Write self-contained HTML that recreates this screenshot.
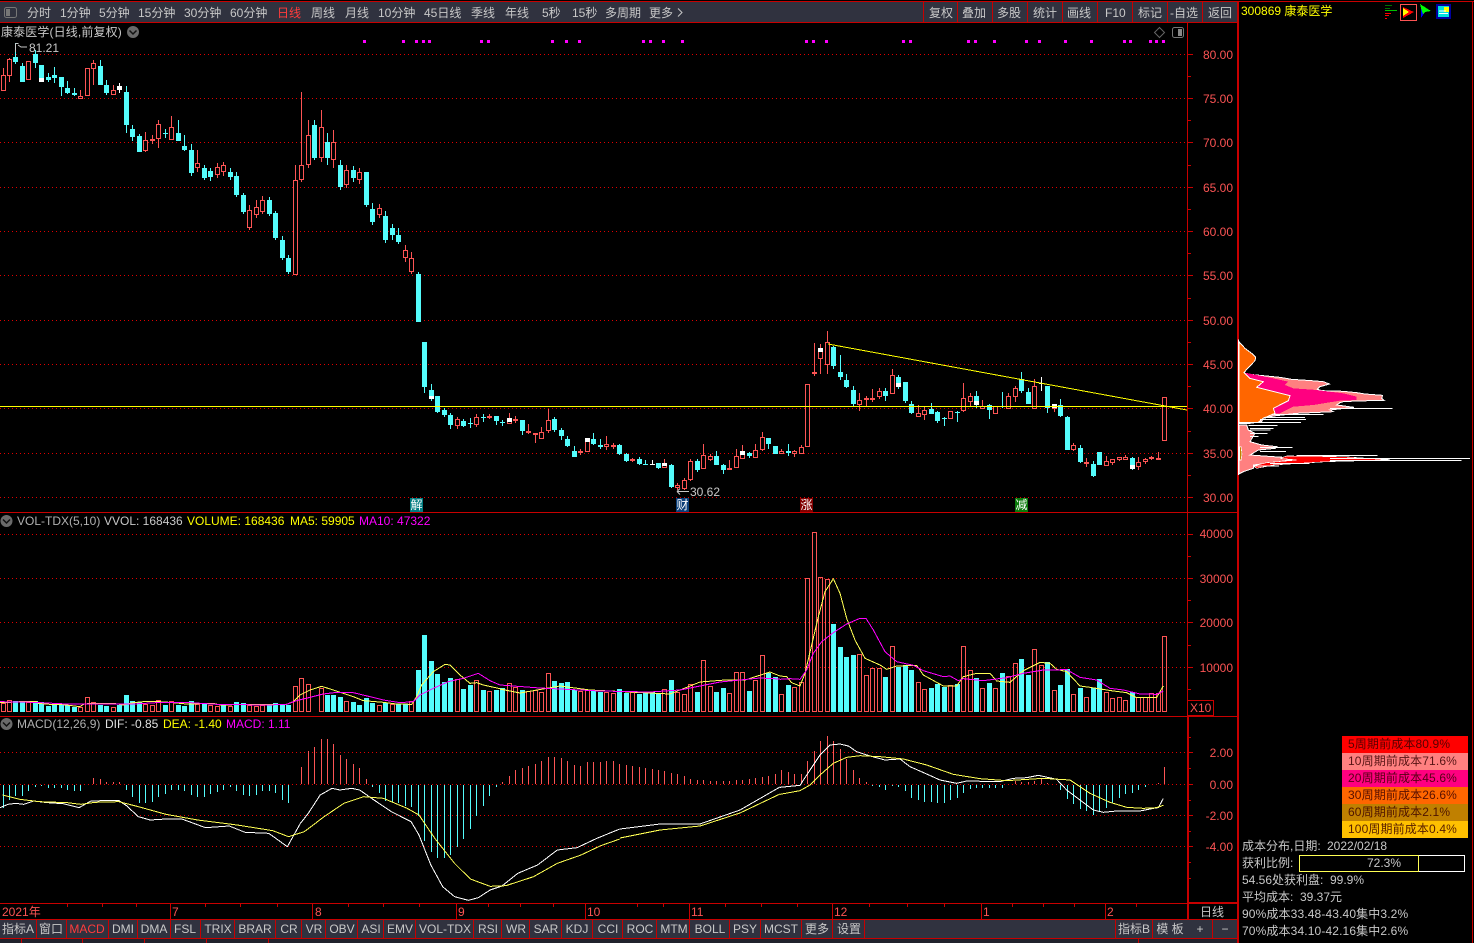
<!DOCTYPE html>
<html><head><meta charset="utf-8"><title>康泰医学</title>
<style>
html,body{margin:0;padding:0;background:#000;width:1474px;height:943px;overflow:hidden}
svg{display:block;position:absolute;left:0;top:0}
text{font-family:"Liberation Sans","WenQuanYi Zen Hei","Noto Sans CJK SC",sans-serif;font-size:12px;fill:#c8c8c8}
.m{text-anchor:middle}.e{text-anchor:end}
.a{fill:#fc5454}.y{fill:#ffff00}.p{fill:#ff00ff}.l{fill:#3a0000;fill-opacity:.85}
.t{letter-spacing:.13px}
.ln polyline{fill:none;stroke-width:1;vector-effect:non-scaling-stroke}
</style></head><body>
<svg width="1474" height="943" viewBox="0 0 1474 943" xmlns="http://www.w3.org/2000/svg">
<rect width="1474" height="943" fill="#000"/>
<g shape-rendering="crispEdges">
<rect x="0" y="2" width="1238" height="20" fill="#30323f"/>
<rect x="0" y="920" width="1238" height="18" fill="#30323f"/>
<rect x="0" y="939" width="1238" height="4" fill="#20222c"/>
<rect x="0" y="1" width="1474" height="1" fill="#c80000"/>
<rect x="0" y="22" width="1238" height="1" fill="#c80000"/>
<rect x="1237" y="1" width="2" height="942" fill="#c80000"/>
<rect x="1472" y="1" width="1" height="942" fill="#c80000"/>
<path d="M923.5 2V22M957.5 2V22M992.5 2V22M1027.5 2V22M1062.5 2V22M1097.5 2V22M1132.5 2V22M1167.5 2V22M1202.5 2V22" stroke="#c80000" fill="none"/>
<rect x="0" y="512" width="1238" height="1" fill="#c80000"/>
<rect x="0" y="716" width="1238" height="1" fill="#c80000"/>
<rect x="0" y="903" width="1238" height="1" fill="#c80000"/>
<rect x="1187" y="902" width="51" height="2" fill="#c80000"/>
<rect x="0" y="919" width="1238" height="1" fill="#c80000"/>
<rect x="0" y="938" width="1238" height="1" fill="#c80000"/>
<rect x="1187" y="23" width="1" height="693" fill="#c80000"/>
<rect x="1187" y="716" width="2" height="203" fill="#c80000"/>
<path d="M170.500 904V919M312.500 904V919M456.500 904V919M585.500 904V919M689.500 904V919M832.500 904V919M981.500 904V919M1105.500 904V919" stroke="#c80000" fill="none"/>
<path d="M67.500 904v3M102.500 904v3M136.500 904v3M205.500 904v3M240.500 904v3M277.500 904v3M348.500 904v3M383.500 904v3M419.500 904v3M488.500 904v3M520.500 904v3M553.500 904v3M637.500 904v3M663.500 904v3M725.500 904v3M761.500 904v3M797.500 904v3M869.500 904v3M907.500 904v3M944.500 904v3M1012.500 904v3M1043.500 904v3M1074.500 904v3M1136.500 904v3" stroke="#c80000" fill="none"/>
<path d="M36.500 920V938M66.500 920V938M108.500 920V938M137.500 920V938M170.500 920V938M200.500 920V938M234.500 920V938M275.500 920V938M301.500 920V938M325.500 920V938M357.500 920V938M383.500 920V938M415.500 920V938M473.500 920V938M501.500 920V938M529.500 920V938M561.500 920V938M592.500 920V938M622.500 920V938M656.500 920V938M689.500 920V938M729.500 920V938M760.500 920V938M801.500 920V938M832.500 920V938M864.500 920V938M1115.500 920V938M1152.500 920V938M1212.500 920V938" stroke="#c80000" fill="none"/>
<path d="M21.500 939v4M82.500 939v4M144.500 939v4M206.500 939v4M268.500 939v4M1138.500 939v4" stroke="#c80000" fill="none"/>
<rect x="1187.500" y="700.500" width="26" height="15" fill="none" stroke="#c80000"/>

<!-- grid -->
<path d="M0 54.5H1187M0 98.5H1187M0 142.5H1187M0 187.5H1187M0 231.5H1187M0 275.5H1187M0 320.5H1187M0 364.5H1187M0 408.5H1187M0 453.5H1187M0 497.5H1187M0 534.5H1187M0 578.5H1187M0 622.5H1187M0 667.5H1187M0 752.5H1187M0 784.5H1187M0 815.5H1187M0 846.5H1187" stroke="#e00000" stroke-dasharray="1 3" fill="none"/>
<path d="M1188 54.5h5M1188 98.5h5M1188 142.5h5M1188 187.5h5M1188 231.5h5M1188 275.5h5M1188 320.5h5M1188 364.5h5M1188 408.5h5M1188 453.5h5M1188 497.5h5M1188 534.5h5M1188 578.5h5M1188 622.5h5M1188 667.5h5M1188 752.5h5M1188 784.5h5M1188 815.5h5M1188 846.5h5M1188 76.5h3M1188 120.5h3M1188 165.5h3M1188 209.5h3M1188 253.5h3M1188 298.5h3M1188 342.5h3M1188 386.5h3M1188 431.5h3M1188 475.5h3M1188 556.5h3M1188 600.5h3M1188 645.5h3M1188 689.5h3M1188 737.5h3M1188 768.5h3M1188 800.5h3M1188 831.5h3M1188 862.5h3M1188 878.5h3" stroke="#c80000" fill="none"/>

<!-- volume bars cyan -->
<path stroke="#54fcfc" stroke-width="5" fill="none" d="M15.5 701V712M22.5 701V712M35.5 701V712M41.5 702V712M48.5 706V712M54.5 704V712M61.5 704V712M67.5 705V712M74.5 707V712M100.5 705V712M106.5 706V712M119.5 705V712M126.500 695V712M132.5 701V712M139.5 702V712M165.5 705V712M178.5 705V712M184.5 706V712M191.5 701V712M204.5 704V712M223.5 705V712M236.5 702V712M243.5 703V712M269.5 705V712M275.5 703V712M282.5 705V712M288.5 705V712M327.5 695V712M333.5 695V712M340.5 697V712M353.5 702V712M359.5 705V712M366.5 698V712M372.5 703V712M385.5 703V712M398.5 704V712M405.5 704V712M418.5 670V712M424.5 635V712M431.5 661V712M437.5 674V712M444.5 682V712M450.5 678V712M463.5 689V712M470.5 685V712M483.5 690V712M496.5 690V712M502.5 688V712M522.5 690V712M554.5 681V712M561.5 683V712M567.5 682V712M574.5 690V712M593.5 691V712M600.5 692V712M619.5 689V712M626.5 693V712M639.5 694V712M645.5 693V712M652.5 692V712M658.5 693V712M671.5 680V712M697.5 692V712M716.5 692V712M723.5 688V712M749.5 691V712M768.5 673V712M775.5 677V712M788.5 685V712M833.5 624V712M840.5 647V712M846.5 657V712M853.5 655V712M885.5 677V712M898.5 667V712M905.5 665V712M911.5 670V712M931.5 688V712M937.5 684V712M944.5 687V712M957.5 684V712M976.5 678V712M989.5 683V712M1002.5 673V712M1021.5 659V712M1028.5 675V712M1047.5 662V712M1060.5 685V712M1067.5 669V712M1080.5 688V712M1093.5 688V712M1099.5 679V712M1132.5 692V712"/>
<!-- volume bars red -->
<path stroke="#fc5454" fill="none" d="M1.5 703.5h4V711.5h-4zM7.5 700.5h4V711.5h-4zM26.5 702.5h4V711.5h-4zM78.5 707.5h4V711.5h-4zM85.5 697.5h4V711.5h-4zM91.5 702.5h4V711.5h-4zM111.5 707.5h4V711.5h-4zM143.5 704.5h4V711.5h-4zM150.5 705.5h4V711.5h-4zM156.5 700.5h4V711.5h-4zM169.5 701.5h4V711.5h-4zM195.5 704.5h4V711.5h-4zM208.5 705.5h4V711.5h-4zM215.5 706.5h4V711.5h-4zM228.5 706.5h4V711.5h-4zM247.5 705.5h4V711.5h-4zM254.5 706.5h4V711.5h-4zM260.5 705.5h4V711.5h-4zM293.5 686.5h4V711.5h-4zM299.5 678.5h4V711.5h-4zM306.5 684.5h4V711.5h-4zM319.5 688.5h4V711.5h-4zM344.5 701.5h4V711.5h-4zM377.5 705.5h4V711.5h-4zM390.5 704.5h4V711.5h-4zM409.5 701.5h4V711.5h-4zM455.5 679.5h4V711.5h-4zM474.5 680.5h4V711.5h-4zM487.5 691.5h4V711.5h-4zM507.5 683.5h4V711.5h-4zM513.5 687.5h4V711.5h-4zM526.5 691.5h4V711.5h-4zM533.5 690.5h4V711.5h-4zM539.5 692.5h4V711.5h-4zM546.5 673.5h4V711.5h-4zM578.5 691.5h4V711.5h-4zM585.5 690.5h4V711.5h-4zM604.5 692.5h4V711.5h-4zM611.5 693.5h4V711.5h-4zM630.5 692.5h4V711.5h-4zM662.5 689.5h4V711.5h-4zM675.5 692.5h4V711.5h-4zM682.5 694.5h4V711.5h-4zM688.5 684.5h4V711.5h-4zM701.5 660.5h4V711.5h-4zM708.5 686.5h4V711.5h-4zM727.5 693.5h4V711.5h-4zM734.5 672.5h4V711.5h-4zM740.5 672.5h4V711.5h-4zM753.5 680.5h4V711.5h-4zM760.5 655.5h4V711.5h-4zM779.5 694.5h4V711.5h-4zM792.5 687.5h4V711.5h-4zM799.5 682.5h4V711.5h-4zM805.5 578.5h4V711.5h-4zM812.5 532.5h4V711.5h-4zM818.5 577.5h4V711.5h-4zM825.5 579.5h4V711.5h-4zM857.5 654.5h4V711.5h-4zM864.5 675.5h4V711.5h-4zM870.5 668.5h4V711.5h-4zM877.5 668.5h4V711.5h-4zM890.5 646.5h4V711.5h-4zM916.5 682.5h4V711.5h-4zM922.5 689.5h4V711.5h-4zM948.5 685.5h4V711.5h-4zM961.5 646.5h4V711.5h-4zM968.5 670.5h4V711.5h-4zM980.5 688.5h4V711.5h-4zM993.5 688.5h4V711.5h-4zM1006.5 676.5h4V711.5h-4zM1013.5 663.5h4V711.5h-4zM1032.5 649.5h4V711.5h-4zM1039.5 665.5h4V711.5h-4zM1052.5 690.5h4V711.5h-4zM1071.5 694.5h4V711.5h-4zM1084.5 697.5h4V711.5h-4zM1104.5 692.5h4V711.5h-4zM1110.5 698.5h4V711.5h-4zM1117.5 697.5h4V711.5h-4zM1123.5 700.5h4V711.5h-4zM1136.5 697.5h4V711.5h-4zM1143.5 697.5h4V711.5h-4zM1149.5 693.5h4V711.5h-4zM1156.5 693.5h4V711.5h-4zM1162.5 636.5h4V711.5h-4z"/>

<!-- MACD histogram red -->
<path stroke="#fc5454" fill="none" d="M93.5 784v-6M100.5 784v-5M106.5 784v-2M113.5 784v-2M119.5 784v-2M301.5 784v-17M308.5 784v-33M314.5 784v-37M321.5 784v-45M327.5 784v-45M333.5 784v-40M340.5 784v-29M346.5 784v-25M353.5 784v-20M359.5 784v-16M366.5 784v-5M502.5 784v-2M509.5 784v-8M515.5 784v-14M522.5 784v-16M528.5 784v-18M535.5 784v-20M541.5 784v-23M548.5 784v-27M554.5 784v-27M561.5 784v-26M567.5 784v-23M574.5 784v-19M580.5 784v-18M587.5 784v-22M593.5 784v-22M600.5 784v-22M606.5 784v-23M613.5 784v-23M619.5 784v-20M626.5 784v-19M632.5 784v-18M639.5 784v-17M645.5 784v-16M652.5 784v-15M658.5 784v-14M664.5 784v-13M671.5 784v-11M677.5 784v-10M684.5 784v-8M690.5 784v-5M697.5 784v-4M703.5 784v-4M710.5 784v-3M716.5 784v-3M723.5 784v-3M729.5 784v-3M736.5 784v-4M742.5 784v-4M749.5 784v-5M755.5 784v-6M762.5 784v-7M768.5 784v-8M775.5 784v-10M781.5 784v-14M788.5 784v-12M794.5 784v-10M801.5 784v-10M807.5 784v-23M814.5 784v-33M820.5 784v-43M827.5 784v-48M833.5 784v-43M840.5 784v-35M846.5 784v-25M853.5 784v-14M859.5 784v-6M866.5 784v-2M1015.5 784v-3M1021.5 784v-2M1028.5 784v-2M1034.5 784v-3M1041.5 784v-5M1047.5 784v-1M1158.5 784v-1M1164.5 784v-17"/>
<!-- MACD histogram cyan -->
<path stroke="#54fcfc" fill="none" d="M3.5 785v23M9.5 785v15M15.5 785v11M22.5 785v11M28.5 785v6M35.5 785v2M41.5 785v1M48.5 785v3M54.5 785v3M61.5 785v3M67.5 785v5M74.5 785v6M80.5 785v6M126.5 785v5M132.5 785v12M139.5 785v18M145.5 785v18M152.5 785v17M158.5 785v12M165.5 785v9M171.5 785v5M178.5 785v5M184.5 785v6M191.5 785v10M197.5 785v12M204.5 785v12M210.5 785v9M217.5 785v7M223.5 785v5M230.5 785v2M236.5 785v6M243.5 785v10M249.5 785v11M256.5 785v10M262.5 785v6M269.5 785v6M275.5 785v8M282.5 785v15M288.5 785v18M372.5 785v2M379.5 785v8M385.5 785v16M392.5 785v17M398.5 785v18M405.5 785v21M411.5 785v22M418.5 785v31M424.5 785v56M431.5 785v67M437.5 785v73M444.5 785v73M450.5 785v70M457.5 785v62M463.5 785v54M470.5 785v44M476.5 785v31M483.5 785v21M489.5 785v11M496.5 785v2M872.5 785v1M879.5 785v2M885.5 785v5M892.5 785v1M898.5 785v2M905.5 785v6M911.5 785v13M918.5 785v15M924.5 785v17M931.5 785v17M937.5 785v18M944.5 785v18M950.5 785v15M957.5 785v13M963.5 785v8M970.5 785v4M976.5 785v3M982.5 785v3M989.5 785v3M995.5 785v3M1002.5 785v3M1060.5 785v5M1067.5 785v14M1073.5 785v19M1080.5 785v24M1086.5 785v26M1093.5 785v30M1099.5 785v27M1106.5 785v23M1112.5 785v18M1119.5 785v13M1125.5 785v9M1132.5 785v8M1138.5 785v5M1145.5 785v2"/>

<!-- candles: cyan wicks -->
<path stroke="#54fcfc" fill="none" d="M15.5 43V64M22.5 63V82M35.5 50V68M48.5 73V82M54.5 67V83M61.5 77V96M67.5 81V94M74.5 88V96M100.5 60V85M106.5 80V95M126.5 86V133M132.5 125V141M139.5 134V152M165.5 129V138M178.5 120V141M184.5 135V151M191.5 144V176M204.5 165V180M210.5 168V181M230.5 168V180M236.5 172V197M243.5 193V214M269.5 197V216M275.5 211V240M282.5 236V260M288.5 255V274M314.5 120V160M327.5 133V165M340.5 160V190M353.5 166V182M366.5 172V207M372.5 203V225M385.5 211V243M392.5 224V240M398.5 228V244M418.5 272V322M424.5 342V393M431.5 384V401M437.5 396V413M444.5 408V417M450.5 413V429M463.5 419V427M470.5 418V428M483.5 414V422M496.5 416V425M502.5 420V426M522.5 420V435M554.5 417V432M561.5 428V440M567.5 436V447M574.5 446V457M593.5 433V445M600.5 439V449M619.5 444V455M626.5 453V462M639.5 457V465M645.5 460V465M658.5 463V469M671.5 464V488M697.5 459V472M716.5 451V465M723.5 464V474M749.5 452V458M768.5 438V449M775.5 446V454M788.5 444V456M833.5 346V369M840.5 355V380M846.5 374V388M853.5 386V406M885.5 388V401M898.5 375V389M905.5 382V403M911.5 401V414M931.5 403V414M937.5 411V423M944.5 417V426M957.5 411V422M976.5 391V408M989.5 404V419M1002.5 392V408M1021.5 372V393M1028.5 388V404M1047.5 386V413M1060.5 399V417M1067.5 416V450M1080.5 445V463M1093.5 461V477M1099.5 452V465M1132.5 457V470"/>
<!-- red wicks -->
<path stroke="#fc5454" fill="none" d="M3.5 68V91M9.5 58V82M80.5 90V99M93.5 60V85M113.5 85V95M145.5 132V152M152.5 135V144M158.5 120V148M171.5 116V140M197.5 150V172M217.5 163V178M223.5 162V176M249.5 205V230M256.5 200V218M262.5 196V214M295.5 165V275M301.5 92V182M308.5 120V168M321.5 110V162M333.5 130V168M346.5 165V188M359.5 168V184M379.5 204V218M405.5 245V262M411.5 252V274M457.5 417V429M476.5 414V427M489.5 414V419M509.5 413V424M515.5 416V423M528.5 424V434M535.5 433V443M541.5 427V439M548.5 409V433M580.5 449V455M606.5 436V450M613.5 443V449M632.5 458V462M664.5 459V468M677.5 483V490M684.5 478V490M690.5 459V481M703.5 444V469M710.5 454V461M729.5 460V470M736.5 449V468M742.5 445V459M755.5 444V458M762.5 432V451M781.5 449V454M794.5 450V457M801.5 445V454M814.5 343V376M820.5 344V374M827.5 331V374M859.5 393V411M866.5 396V406M872.5 389V402M879.5 388V399M892.5 369V394M918.5 405V417M924.5 407V420M963.5 383V412M970.5 393V406M982.5 400V409M1008.5 393V409M1015.5 386V402M1034.5 379V409M1054.5 404V412M1073.5 443V451M1086.5 458V467M1106.5 456V466M1112.5 459V465M1119.5 457V461M1125.5 455V460M1138.5 457V470M1145.5 458V464M1151.5 456V460M1158.5 452V459"/>
<!-- white wicks -->
<path stroke="#ffffff" fill="none" d="M119.5 83V93M652.5 460V465M1041.5 377V391"/>
<!-- cyan bodies -->
<path stroke="#54fcfc" stroke-width="5" fill="none" d="M15.5 57V62M22.5 66V82M35.5 54V63M41.5 65V82M48.5 77V80M54.5 75V78M61.5 77V87M67.5 88V93M74.5 93V95M100.5 66V85M106.5 85V93M126.5 92V125M132.5 129V137M139.5 136V152M165.5 133V134M178.5 133V141M184.5 146V150M191.5 150V173M204.5 168V178M210.5 171V177M230.5 172V177M236.5 176V195M243.5 195V212M269.5 200V214M275.5 213V238M282.5 240V258M288.5 258V272M314.5 125V158M327.5 142V158M340.5 165V187M353.5 170V178M366.5 172V205M372.5 209V222M385.5 216V240M392.5 228V235M398.5 235V242M418.5 274V322M424.5 342V387M431.5 390V399M437.5 396V412M444.5 410V415M450.5 415V425M463.5 421V426M470.5 423V424M483.5 417V418M496.5 416V421M502.5 422V423M522.5 420V431M554.5 419V430M561.5 430V436M567.5 439V446M574.5 451V457M593.5 439V444M600.5 445V447M619.5 445V454M626.5 454V461M639.5 459V464M645.5 464V465M658.5 463V468M671.5 465V487M697.5 461V470M716.5 456V465M723.5 465V470M749.5 453V456M768.5 438V444M775.5 446V454M788.5 451V453M833.5 347V366M840.5 372V377M846.5 380V387M853.5 390V404M885.5 391V396M898.5 377V387M905.5 382V401M911.5 404V413M931.5 409V414M937.5 412V421M944.5 418V419M957.5 412V413M976.5 396V405M989.5 405V410M1002.5 406V407M1021.5 379V391M1028.5 392V404M1047.5 386V408M1060.5 405V416M1067.5 417V450M1080.5 448V462M1093.5 464V476M1099.5 452V465M1132.5 458V469"/>
<!-- red bodies -->
<path stroke="#fc5454" fill="#000" d="M1.5 75.5h4V90.5h-4zM7.5 59.5h4V75.5h-4zM26.5 61.5h4V79.5h-4zM78.5 96.5h4V98.5h-4zM85.5 68.5h4V95.5h-4zM91.5 63.5h4V68.5h-4zM111.5 90.5h4V94.5h-4zM143.5 140.5h4V150.5h-4zM150.5 139.5h4V140.5h-4zM156.5 124.5h4V138.5h-4zM169.5 127.5h4V139.5h-4zM195.5 163.5h4V167.5h-4zM215.5 167.5h4V174.5h-4zM221.5 165.5h4V171.5h-4zM247.5 210.5h4V227.5h-4zM254.5 207.5h4V214.5h-4zM260.5 200.5h4V211.5h-4zM293.5 180.5h4V274.5h-4zM299.5 165.5h4V179.5h-4zM306.5 135.5h4V164.5h-4zM319.5 127.5h4V157.5h-4zM331.5 142.5h4V159.5h-4zM344.5 170.5h4V184.5h-4zM357.5 172.5h4V179.5h-4zM377.5 208.5h4V214.5h-4zM403.5 250.5h4V257.5h-4zM409.5 258.5h4V271.5h-4zM455.5 419.5h4V425.5h-4zM474.5 417.5h4V424.5h-4zM487.5 416.5h4V417.5h-4zM507.5 418.5h4V423.5h-4zM513.5 419.5h4V420.5h-4zM526.5 431.5h4V432.5h-4zM533.5 433.5h4V434.5h-4zM539.5 432.5h4V438.5h-4zM546.5 420.5h4V430.5h-4zM578.5 451.5h4V452.5h-4zM585.5 438.5h4V451.5h-4zM604.5 444.5h4V446.5h-4zM611.5 445.5h4V446.5h-4zM630.5 459.5h4V460.5h-4zM662.5 463.5h4V467.5h-4zM675.5 485.5h4V487.5h-4zM682.5 480.5h4V488.5h-4zM688.5 461.5h4V479.5h-4zM701.5 455.5h4V468.5h-4zM708.5 456.5h4V459.5h-4zM727.5 468.5h4V469.5h-4zM734.5 456.5h4V467.5h-4zM740.5 451.5h4V458.5h-4zM753.5 450.5h4V457.5h-4zM760.5 437.5h4V449.5h-4zM779.5 451.5h4V453.5h-4zM792.5 451.5h4V453.5h-4zM799.5 447.5h4V453.5h-4zM805.5 384.5h4V446.5h-4zM812.5 372.5h4V373.5h-4zM818.5 348.5h4V358.5h-4zM825.5 342.5h4V364.5h-4zM857.5 400.5h4V404.5h-4zM864.5 398.5h4V399.5h-4zM870.5 398.5h4V399.5h-4zM877.5 391.5h4V396.5h-4zM890.5 375.5h4V393.5h-4zM916.5 413.5h4V416.5h-4zM922.5 410.5h4V414.5h-4zM948.5 411.5h4V418.5h-4zM961.5 398.5h4V410.5h-4zM968.5 396.5h4V401.5h-4zM980.5 406.5h4V408.5h-4zM993.5 406.5h4V413.5h-4zM1006.5 396.5h4V408.5h-4zM1013.5 388.5h4V396.5h-4zM1032.5 386.5h4V408.5h-4zM1052.5 404.5h4V408.5h-4zM1071.5 445.5h4V449.5h-4zM1084.5 462.5h4V463.5h-4zM1104.5 461.5h4V465.5h-4zM1110.5 459.5h4V462.5h-4zM1117.5 457.5h4V459.5h-4zM1123.5 457.5h4V459.5h-4zM1136.5 462.5h4V466.5h-4zM1143.5 459.5h4V461.5h-4zM1149.5 457.5h4V458.5h-4zM1156.5 458.5h4V459.5h-4zM1162.5 397.5h4V440.5h-4z"/>
<!-- white bodies -->
<path stroke="#ffffff" stroke-width="5" fill="none" d="M41.5 78V82M119.5 86V90M431.5 396V399M509.5 418V422M587.5 438V442M652.5 464V465M664.5 463V466M742.5 451V455M820.5 348V352M898.5 383V387M976.5 401V405M1041.5 383V384M1054.5 404V408M1132.5 465V469"/>

<!-- lines -->
<g class="ln">
<g transform="translate(0 510) scale(.33333)"><polyline stroke="#ffff54" points="0,578 30,577 60,575 110,575 115,580 150,583 190,584 240,590 250,583 270,580 340,580 370,585 400,578 430,575 480,575 520,578 560,582 640,580 660,585 760,583 860,583 880,575 900,555 930,540 965,529 1000,540 1030,550 1060,560 1090,572 1150,577 1190,582 1235,583 1250,560 1265,525 1300,485 1335,463 1350,465 1380,495 1410,520 1430,518 1450,525 1500,536"/></g>
<polyline stroke="#ffff54" points="500,689 520,693 560,686 590,690 630,692 670,694 700,682 725,680 745,680 770,672 780,676"/>
<g transform="translate(780 520) scale(.33333)"><polyline stroke="#ffff54" points="0,468 20,470 35,488 60,498 75,460 95,375 115,290 135,215 160,176 180,220 200,295 225,360 255,415 300,435 320,448 350,438 410,436 430,465 490,498 530,498 550,470 590,460 630,460 650,483 690,487 730,452 780,427 810,430 830,448 860,455 900,498 930,502 1000,513 1040,518 1070,533 1130,532 1150,498"/></g>
<g transform="translate(0 510) scale(.33333)"><polyline stroke="#ff00ff" points="0,575 100,577 200,582 400,582 470,578 570,578 650,583 800,585 860,583 890,572 930,562 970,552 1010,547 1060,548 1110,560 1150,570 1200,578 1240,575 1260,555 1300,535 1345,515 1390,505 1435,490 1470,512 1500,525"/></g>
<polyline stroke="#ff00ff" points="500,685 540,688 600,691 650,692 680,690 720,682 760,678 780,679"/>
<g transform="translate(780 520) scale(.33333)"><polyline stroke="#ff00ff" points="0,478 30,476 60,478 80,450 100,400 125,365 160,338 200,312 240,295 258,295 280,330 315,395 350,425 400,436 430,452 490,470 510,468 535,482 550,476 610,482 680,473 730,460 790,450 860,449 900,472 950,480 990,505 1030,510 1080,522 1130,523 1150,513"/></g>
<g transform="translate(0 715) scale(.39526 .33333)"><polyline stroke="#ffffff" points="0,278 20,268 40,265 60,268 85,258 120,263 160,266 200,278 230,258 260,257 300,256 320,272 350,305 380,315 420,312 460,312 490,325 520,338 580,333 620,352 680,355 727,395 760,325 780,295 810,240 840,220 860,225 890,220 910,225 940,250 990,290 1040,320 1060,360 1090,450 1120,515 1150,545 1185,556 1210,548 1240,525 1270,513 1310,475 1360,450 1410,405 1460,398 1510,370 1568,342"/></g>
<polyline stroke="#ffffff" points="620,829 660,824 700,824 740,810 780,787"/>
<g transform="translate(780 720) scale(.33333)"><polyline stroke="#ffffff" points="0,202 60,196 90,150 120,105 150,75 180,72 205,78 230,95 270,108 315,120 360,117 390,140 440,162 480,180 530,190 560,183 660,185 700,175 740,173 775,166 830,178 860,210 900,240 940,270 970,277 1010,273 1080,273 1120,265 1135,263 1150,235"/></g>
<g transform="translate(0 715) scale(.39526 .33333)"><polyline stroke="#ffff54" points="6,240 50,253 100,260 170,263 205,268 240,262 300,260 350,275 420,298 500,315 600,330 690,347 730,365 770,350 820,305 870,265 920,245 970,250 1030,280 1060,300 1100,370 1150,445 1190,492 1240,514 1280,512 1350,485 1410,445 1470,420 1520,392 1568,372"/></g>
<polyline stroke="#ffff54" points="620,838 660,830 700,826 740,813 780,794"/>
<g transform="translate(780 720) scale(.33333)"><polyline stroke="#ffff54" points="0,223 60,212 90,195 120,165 160,130 200,112 240,107 300,110 370,117 440,135 520,163 600,176 680,182 790,175 870,180 930,220 990,247 1040,262 1090,265 1130,263 1150,256"/></g>
</g>
<!-- trend lines -->
<path d="M0 406.500H1187" stroke="#ffff00" fill="none"/>
<path d="M828 344L1187 410" stroke="#ffff00" fill="none"/>
</g>

<g shape-rendering="crispEdges" fill="#ff00ff">
<rect x="363" y="40" width="3" height="3"/><rect x="402" y="40" width="3" height="3"/><rect x="415" y="40" width="3" height="3"/><rect x="422" y="40" width="3" height="3"/><rect x="428" y="40" width="3" height="3"/><rect x="480" y="40" width="3" height="3"/><rect x="487" y="40" width="3" height="3"/><rect x="551" y="40" width="3" height="3"/><rect x="565" y="40" width="3" height="3"/><rect x="578" y="40" width="3" height="3"/><rect x="642" y="40" width="3" height="3"/><rect x="649" y="40" width="3" height="3"/><rect x="662" y="40" width="3" height="3"/><rect x="681" y="40" width="3" height="3"/><rect x="805" y="40" width="3" height="3"/><rect x="812" y="40" width="3" height="3"/><rect x="825" y="40" width="3" height="3"/><rect x="902" y="40" width="3" height="3"/><rect x="909" y="40" width="3" height="3"/><rect x="967" y="40" width="3" height="3"/><rect x="974" y="40" width="3" height="3"/><rect x="993" y="40" width="3" height="3"/><rect x="1025" y="40" width="3" height="3"/><rect x="1038" y="40" width="3" height="3"/><rect x="1064" y="40" width="3" height="3"/><rect x="1090" y="40" width="3" height="3"/><rect x="1123" y="40" width="3" height="3"/><rect x="1129" y="40" width="3" height="3"/><rect x="1149" y="40" width="3" height="3"/><rect x="1155" y="40" width="3" height="3"/><rect x="1162" y="40" width="3" height="3"/>
</g>

<rect x="4.500" y="7.500" width="12" height="10" rx="2" fill="#30323f" stroke="#777"/><rect x="6" y="9" width="4" height="7" fill="#777"/>
<text x="27" y="17">分时</text><text x="60" y="17">1分钟</text><text x="99" y="17">5分钟</text><text x="138" y="17">15分钟</text><text x="184" y="17">30分钟</text><text x="230" y="17">60分钟</text><text x="277" y="17" style="fill:#ff3c3c">日线</text><text x="311" y="17">周线</text><text x="345" y="17">月线</text><text x="378" y="17">10分钟</text><text x="424" y="17">45日线</text><text x="471" y="17">季线</text><text x="505" y="17">年线</text><text x="542" y="17">5秒</text><text x="572" y="17">15秒</text><text x="605" y="17">多周期</text><text x="649" y="17">更多</text>
<path d="M678 8.500l4 4-4 4" fill="none" stroke="#c8c8c8"/>
<text x="929" y="17">复权</text><text x="962" y="17">叠加</text><text x="997" y="17">多股</text><text x="1033" y="17">统计</text><text x="1067" y="17">画线</text><text x="1105" y="17">F10</text><text x="1138" y="17">标记</text><text x="1170" y="17">-自选</text><text x="1208" y="17">返回</text>

<text class="t" x="1" y="36">康泰医学(日线,前复权)</text>
<circle cx="133" cy="32" r="6" fill="#6a6a6a"/><path d="M129.500 30.500l3.500 3.500 3.500-3.500" fill="none" stroke="#111" stroke-width="1.500"/>
<path d="M1159.500 27.500l5 5-5 5-5-5z" fill="none" stroke="#666"/>
<rect x="1172.500" y="27.500" width="11" height="10" rx="2" fill="none" stroke="#777"/><rect x="1178" y="29" width="4" height="7" fill="#888"/>

<path d="M15.500 43.500V52M15.500 43.500h3M18 45l3 2h6" fill="none" stroke="#c8c8c8"/>
<text x="29" y="52">81.21</text>
<path d="M677 491.500h12M677 491.500l3-3M677 491.500l3 3" fill="none" stroke="#c8c8c8"/>
<text x="690" y="496">30.62</text>

<g shape-rendering="crispEdges"><rect x="410" y="498" width="13" height="14" fill="#007c80"/><rect x="676" y="498" width="13" height="14" fill="#0a3e78"/><rect x="800" y="498" width="13" height="14" fill="#800000"/><rect x="1015" y="498" width="13" height="14" fill="#0a7a0a"/></g>
<text x="410.500" y="509" style="fill:#fff">解</text><text x="676.500" y="509" style="fill:#fff">财</text><text x="800.500" y="509" style="fill:#fff">涨</text><text x="1015.500" y="509" style="fill:#fff">减</text>

<g>
<text class="a e" x="1233" y="59">80.00</text><text class="a e" x="1233" y="103">75.00</text><text class="a e" x="1233" y="147">70.00</text><text class="a e" x="1233" y="192">65.00</text><text class="a e" x="1233" y="236">60.00</text><text class="a e" x="1233" y="280">55.00</text><text class="a e" x="1233" y="325">50.00</text><text class="a e" x="1233" y="369">45.00</text><text class="a e" x="1233" y="413">40.00</text><text class="a e" x="1233" y="458">35.00</text><text class="a e" x="1233" y="502">30.00</text>
<text class="a e" x="1233" y="538">40000</text><text class="a e" x="1233" y="583">30000</text><text class="a e" x="1233" y="627">20000</text><text class="a e" x="1233" y="672">10000</text>
<text class="a" x="1190" y="712">X10</text>
<text class="a e" x="1233" y="757">2.00</text><text class="a e" x="1233" y="789">0.00</text><text class="a e" x="1233" y="820">-2.00</text><text class="a e" x="1233" y="851">-4.00</text>
</g>

<circle cx="6.500" cy="521" r="6" fill="#6a6a6a"/><path d="M3 519.500l3.500 3.500 3.500-3.500" fill="none" stroke="#111" stroke-width="1.500"/>
<text x="17" y="525" style="fill:#b0b0b0">VOL-TDX(5,10)</text><text x="104" y="525">VVOL: 168436</text><text class="y" x="187" y="525">VOLUME: 168436</text><text class="y" x="290" y="525">MA5: 59905</text><text class="p" x="359" y="525">MA10: 47322</text>
<circle cx="6.500" cy="724" r="6" fill="#6a6a6a"/><path d="M3 722.500l3.500 3.500 3.500-3.500" fill="none" stroke="#111" stroke-width="1.500"/>
<text x="17" y="728" style="fill:#b0b0b0">MACD(12,26,9)</text><text x="105" y="728" style="fill:#e0e0e0">DIF: -0.85</text><text class="y" x="163" y="728">DEA: -1.40</text><text class="p" x="226" y="728">MACD: 1.11</text>

<text class="a" x="2" y="916">2021年</text><text class="a" x="172" y="916">7</text><text class="a" x="315" y="916">8</text><text class="a" x="458" y="916">9</text><text class="a" x="587" y="916">10</text><text class="a" x="691" y="916">11</text><text class="a" x="834" y="916">12</text><text class="a" x="983" y="916">1</text><text class="a" x="1107" y="916">2</text>
<text x="1200" y="916">日线</text>

<text class="m" x="18" y="933">指标A</text><text class="m" x="51" y="933">窗口</text><text class="m" x="87" y="933" style="fill:#ff3c3c">MACD</text><text class="m" x="123" y="933">DMI</text><text class="m" x="154" y="933">DMA</text><text class="m" x="185" y="933">FSL</text><text class="m" x="218" y="933">TRIX</text><text class="m" x="255" y="933">BRAR</text><text class="m" x="289" y="933">CR</text><text class="m" x="314" y="933">VR</text><text class="m" x="342" y="933">OBV</text><text class="m" x="371" y="933">ASI</text><text class="m" x="400" y="933">EMV</text><text class="m" x="445" y="933">VOL-TDX</text><text class="m" x="488" y="933">RSI</text><text class="m" x="516" y="933">WR</text><text class="m" x="546" y="933">SAR</text><text class="m" x="577" y="933">KDJ</text><text class="m" x="608" y="933">CCI</text><text class="m" x="640" y="933">ROC</text><text class="m" x="674" y="933">MTM</text><text class="m" x="710" y="933">BOLL</text><text class="m" x="745" y="933">PSY</text><text class="m" x="781" y="933">MCST</text><text class="m" x="817" y="933">更多</text><text class="m" x="849" y="933">设置</text><text class="m" x="1134" y="933">指标B</text><text class="m" x="1170" y="933">模 板</text><text class="m" x="1200" y="933">+</text><text class="m" x="1225" y="933">−</text>

<text class="y" x="1241" y="15">300869 康泰医学</text>
<g shape-rendering="crispEdges">
<path d="M1385 5.500h7M1385 8.500h5" stroke="#007000" fill="none"/>
<path d="M1385 10.500h12" stroke="#00c000" fill="none"/>
<path d="M1385 13.500h6M1385 15.500h4M1385 18.500h2" stroke="#ff0000" fill="none"/>
<rect x="1400.500" y="4.500" width="16" height="16" fill="#000" stroke="#fc5454"/>
<path d="M1403 7L1414 12 1403 18z" fill="#ff0000"/><path d="M1403 8L1409 12 1403 16z" fill="#ffff00"/>
<path d="M1421 8L1425 12 1421 18z" fill="#0000ff"/><path d="M1420 4L1431 11 1425 12 1423 14 1421 8z" fill="#00ff00"/>
<rect x="1436" y="4" width="15" height="15" fill="#0000a0"/><rect x="1438" y="6" width="11" height="11" fill="#00e0e0"/><rect x="1444" y="7" width="5" height="5" fill="#ffff00"/><path d="M1439 11h7M1439 13.500h9" stroke="#fff" fill="none"/>
</g>

<g id="cost" shape-rendering="crispEdges" transform="translate(1230 330) scale(.33333)">
<polygon points="27,285 50,285 55,300 75,310 60,335 95,345 140,350 135,355 85,360 60,375 130,380 205,385 150,395 70,405 70,415 40,425 27,432" fill="#ff8080" stroke="#fff" stroke-width="3"/>
<polygon points="170,378 340,380 410,385 480,388 400,392 290,395 130,405 80,415 70,408 110,398 200,390 150,385" fill="#ff0000" stroke="#fff" stroke-width="2"/>
<polygon points="29,350 33,350 36,372 33,390 29,390" fill="#c08000" stroke="#fff" stroke-width="2"/>
<polygon points="40,135 60,133 150,142 185,148 245,152 280,155 298,162 270,170 262,178 275,182 340,184 380,188 405,192 458,196 455,205 462,211 380,213 340,215 330,218 320,225 372,232 300,240 310,245 200,250 130,258 100,265 95,275 60,280 27,280 27,100" fill="#ff8080" stroke="#fff" stroke-width="3"/>
<polygon points="45,128 130,145 175,155 165,165 190,175 260,180 340,190 380,200 380,210 330,212 250,225 190,230 150,250 135,250 130,235 175,212 180,197 80,172 100,155 60,145" fill="#ff0080"/>
<polygon points="27,35 45,55 65,70 77,82 75,92 60,108 50,118 42,128 60,145 100,155 80,172 180,197 175,212 130,235 135,250 100,265 85,277 27,277" fill="#ff6600" stroke="#fff" stroke-width="3"/>
<path d="M25 28V435" stroke="#fff" stroke-width="3" fill="none"/>
<path d="M300 235H488M130 253H280M100 263H225M90 268H228M80 277H213M55 287H143M60 295H130M60 300H122M60 310H113M60 320H85M90 352H188M90 365H168M200 376H443M300 385H720M300 391H695M120 400H238M70 408H147" stroke="#fff" stroke-width="3" fill="none"/>
</g>

<g shape-rendering="crispEdges">
<rect x="1342" y="736" width="126" height="17" fill="#ff0000"/><rect x="1342" y="753" width="126" height="17" fill="#ff8080"/><rect x="1342" y="770" width="126" height="17" fill="#ff0080"/><rect x="1342" y="787" width="126" height="17" fill="#ff6600"/><rect x="1342" y="804" width="126" height="17" fill="#c08000"/><rect x="1342" y="821" width="126" height="17" fill="#ffc000"/>
<rect x="1299.500" y="855.500" width="165" height="16" fill="#000" stroke="#fff"/>
<rect x="1299.500" y="855.500" width="119" height="16" fill="none" stroke="#ffff54"/>
</g>
<text class="l t" x="1348" y="748">5周期前成本80.9%</text><text class="l t" x="1348" y="765">10周期前成本71.6%</text><text class="l t" x="1348" y="782">20周期前成本45.6%</text><text class="l t" x="1348" y="799">30周期前成本26.6%</text><text class="l t" x="1348" y="816">60周期前成本2.1%</text><text class="l t" x="1348" y="833">100周期前成本0.4%</text>
<text x="1242" y="850">成本分布,日期:</text><text x="1327" y="850">2022/02/18</text>
<text x="1242" y="867">获利比例:</text><text class="m" x="1384" y="867">72.3%</text>
<text x="1242" y="884">54.56处获利盘:</text><text x="1330" y="884">99.9%</text>
<text x="1242" y="901">平均成本:</text><text x="1300" y="901">39.37元</text>
<text class="t" x="1242" y="918">90%成本33.48-43.40集中3.2%</text>
<text class="t" x="1242" y="935">70%成本34.10-42.16集中2.6%</text>
</svg>
</body></html>
